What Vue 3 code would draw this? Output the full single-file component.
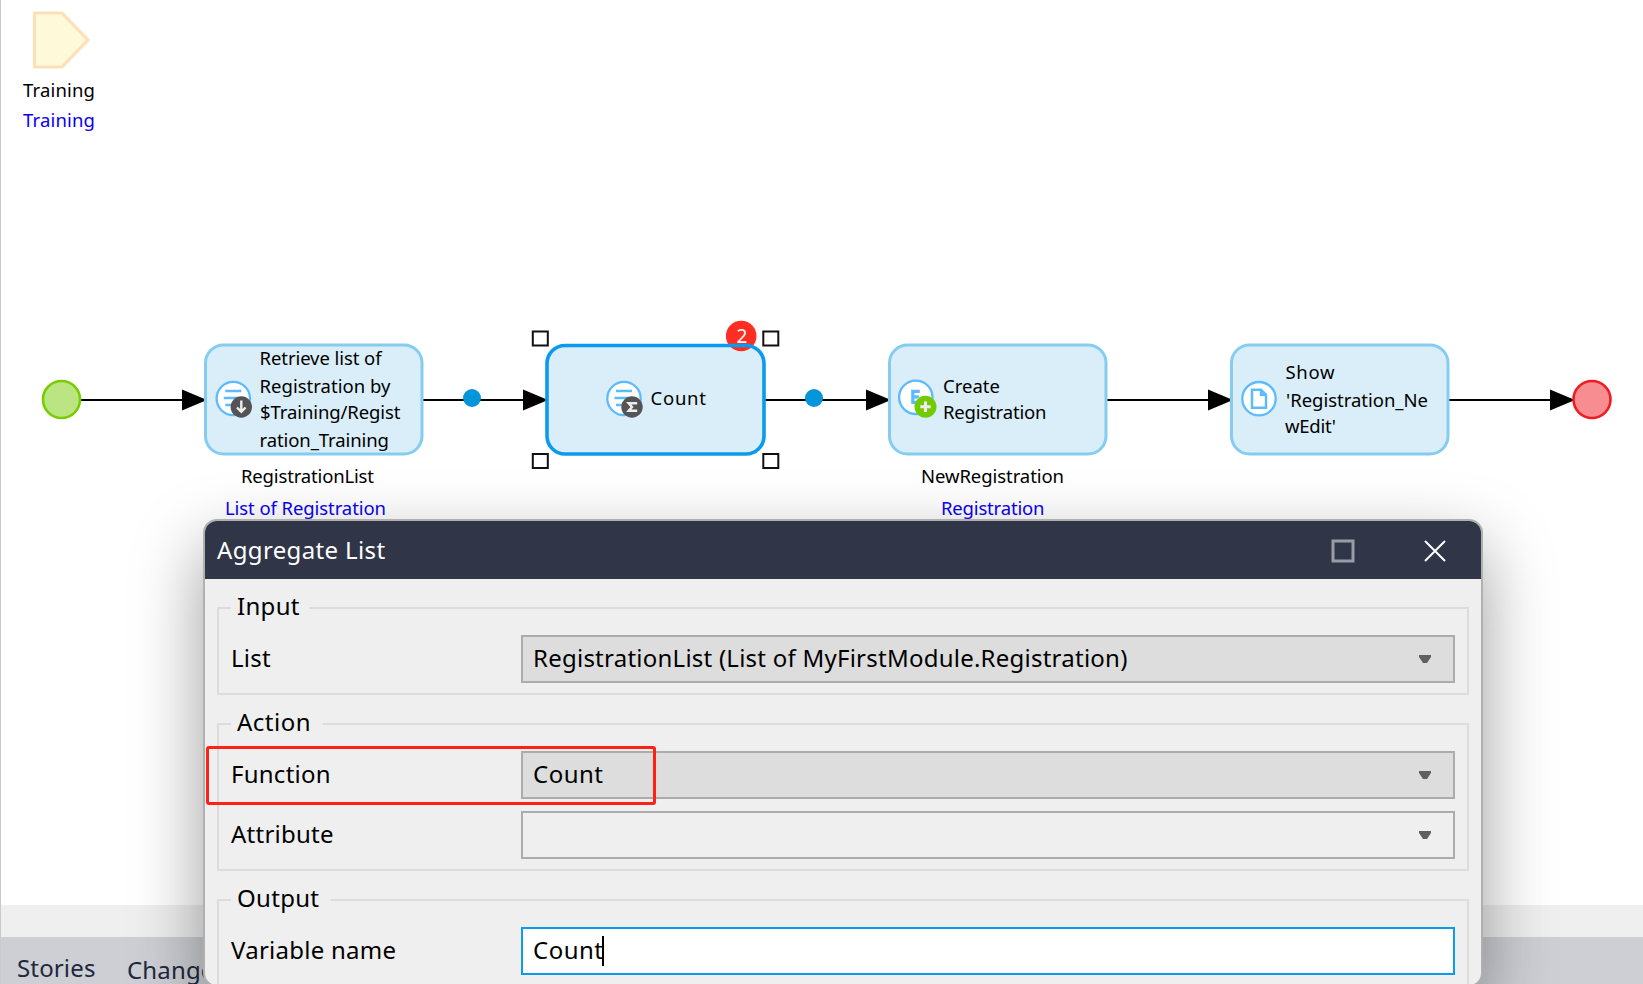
<script setup>
const arrows = [
  { from: 81, to: 207 },
  { from: 422, to: 548 },
  { from: 765, to: 891 },
  { from: 1106, to: 1233 },
  { from: 1448, to: 1575 },
]

const handles = [
  { x: 532.8, y: 331.5 },
  { x: 763.3, y: 331.5 },
  { x: 532.8, y: 454 },
  { x: 763.3, y: 454 },
]

const boxes = [{ x: 205.5 }, { x: 889.5 }, { x: 1231.5 }]

const labels = [
  { text: 'Training', x: 23, y: 97, w: 72 },
  { text: 'Training', x: 23, y: 127, w: 72, type: true },
  { text: 'Retrieve list of', x: 259.5, y: 365, w: 122 },
  { text: 'Registration by', x: 259.5, y: 393, w: 131 },
  { text: '$Training/Regist', x: 260, y: 419, w: 140.5 },
  { text: 'ration_Training', x: 259.5, y: 447, w: 129.5 },
  { text: 'RegistrationList', x: 241, y: 483, w: 133 },
  { text: 'List of Registration', x: 225, y: 515, w: 161, type: true },
  { text: 'Count', x: 650.5, y: 405, w: 55.5 },
  { text: 'Create', x: 943, y: 393, w: 57 },
  { text: 'Registration', x: 943, y: 419, w: 103.5 },
  { text: 'NewRegistration', x: 921, y: 483, w: 143 },
  { text: 'Registration', x: 941, y: 515, w: 103.5, type: true },
  { text: 'Show', x: 1285.5, y: 379, w: 49 },
  { text: "'Registration_Ne", x: 1286, y: 407, w: 142 },
  { text: "wEdit'", x: 1285, y: 433, w: 51 },
]
</script>

<template>
  <div class="app">
    <svg class="canvas" width="1643" height="905" viewBox="0 0 1643 905">
      <path class="param" d="M34.5 13H62L88 40L62 67H34.5Z" />

      <g v-for="a in arrows" :key="a.from">
        <path class="line" :d="`M${a.from} 400H${a.to - 10}`" />
        <path :d="`M${a.to - 25} 389.5L${a.to} 400L${a.to - 25} 410.5Z`" />
      </g>
      <circle class="dot" cx="472" cy="398" r="9" />
      <circle class="dot" cx="814" cy="398" r="9" />

      <circle class="start" cx="61.5" cy="399.5" r="18.5" />
      <circle class="end" cx="1592" cy="399.5" r="18.5" />

      <rect v-for="b in boxes" :key="b.x" class="box" :x="b.x" y="345" width="216.5" height="109" rx="18" />

      <rect class="box-fill" x="547" y="345.5" width="217" height="108.5" rx="18" />
      <circle class="badge" cx="741.2" cy="336" r="15.3" />
      <text class="badge-text" x="742" y="343" text-anchor="middle">2</text>
      <rect class="box-sel" x="547" y="345.5" width="217" height="108.5" rx="18" />
      <rect v-for="(h, i) in handles" :key="i" class="handle" :x="h.x" :y="h.y" width="15" height="14" />

      <g transform="translate(233.3 398.5)">
        <circle class="ring" r="16.7" />
        <path class="glyph" d="M-8 -7.5H8M-9.5 -.5H5M-8 6.5H0" />
        <circle class="dark" cx="8" cy="8.5" r="10.7" />
        <path class="mark" d="M8 2V13M3.7 9L8 13.3L12.3 9" />
      </g>
      <g transform="translate(624 398.5)">
        <circle class="ring" r="16.7" />
        <path class="glyph" d="M-8 -7.5H8M-9.5 -.5H5M-8 6.5H0" />
        <circle class="dark" cx="8" cy="8.5" r="10.7" />
        <path class="mark" d="M12 6V4.8H4.7L8 8.5L4.7 12.2H12V11" />
      </g>
      <g transform="translate(915.8 397.3)">
        <circle class="ring" r="16.7" />
        <path class="glyph letter" d="M4 -6H-3V5H4M-3 -.5H3" />
        <circle class="green" cx="9.7" cy="9.5" r="11" />
        <path class="mark plus" d="M9.7 4.3V14.7M4.5 9.5H14.9" />
      </g>
      <g transform="translate(1259 398.7)">
        <circle class="ring" r="16.7" />
        <path class="glyph page" d="M-7 -9H2L7 -4V9H-7ZM2 -9V-4H7" />
      </g>

      <text
        v-for="(l, i) in labels"
        :key="i"
        :class="['label', { type: l.type }]"
        :x="l.x"
        :y="l.y"
        :textLength="l.w"
      >{{ l.text }}</text>
    </svg>
    <div class="strip"></div>
    <footer class="tabs">
      <span class="tab stories">Stories</span>
      <span class="tab changes">Changes</span>
    </footer>

    <section class="dialog">
      <header class="title-bar">
        <h1 class="title">Aggregate List</h1>
        <svg class="max" width="24" height="24" viewBox="0 0 24 24"><rect x="2" y="2" width="20" height="20" /></svg>
        <svg class="close" width="24" height="24" viewBox="0 0 24 24"><path d="M2 2L22 22M22 2L2 22" /></svg>
      </header>
      <div class="body">
        <div class="group">
          <div class="legend input">Input</div>
          <div class="row">
            <label class="name">List</label>
            <div class="field filled">
              <span class="value">RegistrationList (List of MyFirstModule.Registration)</span>
              <svg class="caret" width="12" height="8" viewBox="0 0 12 8"><path d="M0 0H12V2L8 8H4L0 2Z" /></svg>
            </div>
          </div>
        </div>
        <div class="group">
          <div class="legend action">Action</div>
          <div class="row">
            <label class="name">Function</label>
            <div class="field filled">
              <span class="value count">Count</span>
              <svg class="caret" width="12" height="8" viewBox="0 0 12 8"><path d="M0 0H12V2L8 8H4L0 2Z" /></svg>
            </div>
          </div>
          <div class="row">
            <label class="name">Attribute</label>
            <div class="field">
              <span class="value"></span>
              <svg class="caret" width="12" height="8" viewBox="0 0 12 8"><path d="M0 0H12V2L8 8H4L0 2Z" /></svg>
            </div>
          </div>
        </div>
        <div class="group">
          <div class="legend output">Output</div>
          <div class="row">
            <label class="name">Variable name</label>
            <div class="field active">
              <span class="value count">Count</span>
              <i class="cursor"></i>
            </div>
          </div>
        </div>
      </div>
      <div class="highlight"></div>
    </section>
  </div>
</template>

<style>
body {
  margin: 0;
  overflow: hidden;
}
</style>

<style scoped>
.app {
  position: relative;
  box-sizing: border-box;
  width: 1643px;
  height: 984px;
  overflow: hidden;
  display: flex;
  flex-direction: column;
  background: #fff;
  border-left: 1px solid #c9cad0;
  font-family: "Noto Sans", "Open Sans", sans-serif;
  color: #000;
}
.canvas {
  display: block;
  flex: none;
  margin-left: -1px;
}
.strip {
  height: 32px;
  flex: none;
  background: #efefef;
}
.tabs {
  flex: 1;
  display: flex;
  background: #cdcfd4;
  color: #20283c;
  padding-left: 16px;
}
.tab {
  font-size: 24px;
  line-height: 34px;
  letter-spacing: 0.15px;
  white-space: nowrap;
}
.stories { margin-top: 14px; width: 110px; }
.changes { margin-top: 16px; }

.param { fill: #fef9d9; stroke: #fddfb8; stroke-width: 3; }
.line { stroke: #000; stroke-width: 2; }
.dot { fill: #0595db; }
.start { fill: #bbe582; stroke: #78cc00; stroke-width: 2.6; }
.end { fill: #f78c91; stroke: #f01b24; stroke-width: 2.6; }
.box { fill: #d9eef9; stroke: #85cdf0; stroke-width: 3; }
.box-fill { fill: #d9eef9; }
.box-sel { fill: none; stroke: #0c9bec; stroke-width: 3.6; }
.badge { fill: #ff2d22; }
.badge-text { fill: #fff; font-size: 19px; }
.handle { fill: #fff; stroke: #111; stroke-width: 2; }
.ring { fill: #fff; stroke: #5cbbff; stroke-width: 2.3; }
.glyph { fill: none; stroke: #5cbbff; stroke-width: 2.4; }
.letter { stroke-width: 3.2; }
.page { stroke-width: 2.5; }
.dark { fill: #545454; }
.green { fill: #72cb05; }
.mark { fill: none; stroke: #eee; stroke-width: 2.4; }
.plus { stroke-width: 3; }
.label { font-size: 18.5px; fill: #000; }
.label.type { fill: #0a00f5; }

.dialog {
  position: absolute;
  left: 202px;
  top: 519px;
  width: 1280px;
  height: 468px;
  box-sizing: border-box;
  border: 2px solid #b0b0b0;
  border-radius: 14px;
  background: #efefef;
  box-shadow: 0 28px 70px rgba(0, 0, 0, 0.39);
}
.title-bar {
  display: flex;
  align-items: center;
  height: 58px;
  padding: 0 34px 0 12px;
  background: #303647;
  border-radius: 12px 12px 0 0;
}
.title {
  flex: 1;
  margin: 0;
  font-size: 24px;
  font-weight: 400;
  line-height: 34px;
  letter-spacing: 0.36px;
  color: #fff;
}
.max, .close { margin-top: 2px; }
.max { margin-right: 68px; fill: none; stroke: #999ca6; stroke-width: 3; }
.close { fill: none; stroke: #fff; stroke-width: 2; }
.body {
  display: flex;
  flex-direction: column;
  gap: 28px;
  padding: 28px 12px 0;
}
.group {
  border: 2px solid #dcdcdc;
  padding: 0 12px 10px 12px;
}
.legend {
  box-sizing: border-box;
  height: 34px;
  margin: -20px 0 12px;
  padding-left: 6px;
  background: #efefef;
  font-size: 24px;
  line-height: 34px;
  letter-spacing: 0.3px;
  white-space: nowrap;
}
.legend.input { width: 78px; }
.legend.action { width: 92px; letter-spacing: 0.5px; }
.legend.output { width: 100px; }
.row { display: flex; align-items: center; height: 48px; }
.row + .row { margin-top: 12px; }
.name {
  width: 290px;
  padding-bottom: 2px;
  font-size: 24px;
  line-height: 34px;
  letter-spacing: 0.25px;
}
.field {
  box-sizing: border-box;
  flex: none;
  width: 934px;
  height: 48px;
  display: flex;
  align-items: center;
  border: 2px solid #ababab;
  padding: 0 22px 0 10px;
  font-size: 24px;
  line-height: 34px;
}
.field.filled { background: #ddd; }
.field.active { background: #fff; border-color: #0c9bec; }
.value { padding-bottom: 2px; letter-spacing: 0.24px; white-space: nowrap; }
.value.count { letter-spacing: 0.5px; }
.caret { margin-left: auto; fill: #606060; }
.cursor { width: 2px; height: 30px; margin-left: -2px; background: #000; }
.highlight {
  position: absolute;
  left: 1px;
  top: 225px;
  width: 450px;
  height: 59px;
  box-sizing: border-box;
  border: 3px solid #ff2116;
  border-radius: 3px;
}
</style>
